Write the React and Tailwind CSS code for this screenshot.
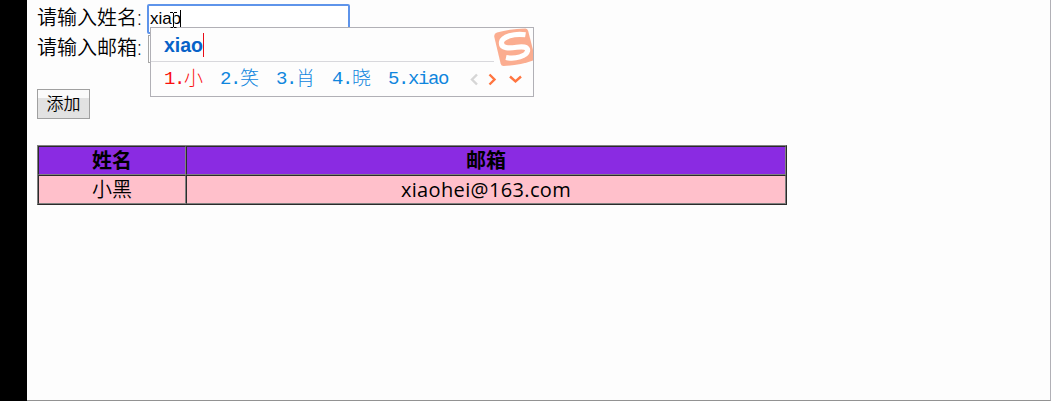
import React from 'react';

const candidates = [
  { n: '1.', word: '小', color: 'text-[#fa0f0f]' },
  { n: '2.', word: '笑', color: 'text-[#0f86dd]' },
  { n: '3.', word: '肖', color: 'text-[#0f86dd]' },
  { n: '4.', word: '晓', color: 'text-[#0f86dd]' },
];

function SogouLogo() {
  return (
    <svg className="absolute right-0 top-0 h-[40px] w-[40px]" viewBox="493 28 40 40">
      <path
        d="M497 32.500 Q512 28.500 525.500 28.500 Q527.500 28.500 528.200 31 L533 50 L533 60.500 Q519 65.500 503.500 66 Q501.300 66 500.600 63.500 L494.300 37 Q493.700 33.500 497 32.500Z"
        fill="#fbad90"
      />
      <path
        d="M525.500 34.800 C514 33 502.500 37 501.500 42 C500.500 49 510 48.300 516.500 47.300 C522 46.500 528.500 46.500 527.500 51 C526.500 56 515.500 59.500 506 57.500"
        fill="none"
        stroke="#fff"
        strokeWidth="5.200"
      />
    </svg>
  );
}

function ImePopup() {
  return (
    <div className="absolute left-[150px] top-[27px] z-10 h-[70px] w-[384px] overflow-hidden border border-[#b1b0b6] bg-[#fdfdfd]">
      <div className="flex h-[34px] w-[343px] items-center border-b border-[#d8d8dc] pl-[13px]">
        <span className="font-['Liberation_Sans',sans-serif] w-[39px] text-[19.5px] font-bold leading-[34px] text-[#0762c8]">xiao</span>
        <span className="h-[24px] w-px bg-[#e80c18]" />
      </div>
      <div className="flex h-[34px] items-center pl-[13px] font-['Liberation_Mono','Noto_Sans_CJK_SC',monospace] text-[19px] leading-[34px]">
        {candidates.map((c) => (
          <span key={c.n} className={`flex w-[56px] shrink-0 ${c.color}`}>
            <span className="w-[20px] tracking-[-1.4px]">{c.n}</span>
            <span className="pt-px text-[19px] font-light">{c.word}</span>
          </span>
        ))}
        <span className="w-[60px] shrink-0 tracking-[-1.4px] text-[#0f86dd]">5.xiao</span>
        <svg className="ml-[21px] h-[14px] w-[56px] shrink-0" viewBox="0 0 56 14" fill="none" strokeWidth="2.400">
          <path d="M8 2.500 L3 7.500 L8 12.500" stroke="#d6d6d6" />
          <path d="M20.500 2.500 L25.500 7.500 L20.500 12.500" stroke="#ff7540" />
          <path d="M41 4.500 L46.500 9.500 L52 4.500" stroke="#ff7540" />
        </svg>
      </div>
      <SogouLogo />
    </div>
  );
}

function TextCursor() {
  return (
    <svg className="absolute left-[168px] top-[11px] z-20 h-[17px] w-[11px]" viewBox="0 0 11 17" fill="none">
      <path d="M5.500 3 V15" stroke="#fff" strokeWidth="2" />
      <path d="M2 1.500 H5 M6 1.500 H9 M5.500 2 V16 M2.500 16.500 H5 M6 16.500 H8.500" stroke="#000" />
    </svg>
  );
}

export default function App() {
  return (
    <div className="relative flex h-[401px] w-[1051px] overflow-hidden bg-[#fdfdfd] font-['Open_Sans','Noto_Sans_CJK_SC',sans-serif] text-[20px] text-black">
      <div className="w-[27px] shrink-0 bg-black" />
      <main className="flex flex-1 flex-col items-start border-b border-r border-b-[#929292] border-r-[#b1b0b6] pl-[10px] pt-[4px]">
        <div className="flex h-[30px] items-start">
          <label className="w-[110px] font-[350] leading-[28px]">请输入姓名:</label>
          <div className="flex h-[30px] w-[203px] items-center rounded-[2px] border-2 border-[#5e94ea] bg-white pl-px font-['Liberation_Sans',sans-serif] text-[17px]">
            <span className="w-[30px] border-b border-black leading-[19px]">xiao</span>
            <span className="h-[18px] w-px bg-black" />
          </div>
        </div>
        <div className="flex h-[30px] items-start">
          <label className="w-[111px] font-[350] leading-[28px]">请输入邮箱:</label>
          <div className="mt-px h-[28px] w-[200px] border border-[#a6a6a6] bg-white" />
        </div>
        <button className="mt-[25px] h-[30px] w-[53px] shrink-0 border border-[#a0a0a0] bg-linear-to-b from-[#fbfbfb] from-30% to-[#e2e2e2] to-30% text-[17px] font-[350] leading-[28px]">
          添加
        </button>
        <table className="mt-[26px] w-[750px] table-fixed border-separate border-spacing-0 border-b border-l border-r border-t border-b-[#2b2b2b] border-l-[#808080] border-r-[#2b2b2b] border-t-[#808080] text-center">
          <colgroup>
            <col className="w-[148px]" />
            <col />
          </colgroup>
          <thead>
            <tr className="h-[29px] bg-[#8a2be2] leading-[27px]">
              <th className="border-b border-l border-r border-t border-b-[#808080] border-l-[#2b2b2b] border-r-[#808080] border-t-[#2b2b2b] p-0">姓名</th>
              <th className="border-b border-l border-r border-t border-b-[#808080] border-l-[#2b2b2b] border-r-[#808080] border-t-[#2b2b2b] p-0">邮箱</th>
            </tr>
          </thead>
          <tbody>
            <tr className="h-[29px] bg-[#ffc0cb] leading-[27px]">
              <td className="border-b border-l border-r border-t border-b-[#808080] border-l-[#2b2b2b] border-r-[#808080] border-t-[#2b2b2b] p-0 font-[350]">小黑</td>
              <td className="border-b border-l border-r border-t border-b-[#808080] border-l-[#2b2b2b] border-r-[#808080] border-t-[#2b2b2b] p-0 tracking-[0.36px]">xiaohei@163.com</td>
            </tr>
          </tbody>
        </table>
      </main>
      <ImePopup />
      <TextCursor />
    </div>
  );
}
